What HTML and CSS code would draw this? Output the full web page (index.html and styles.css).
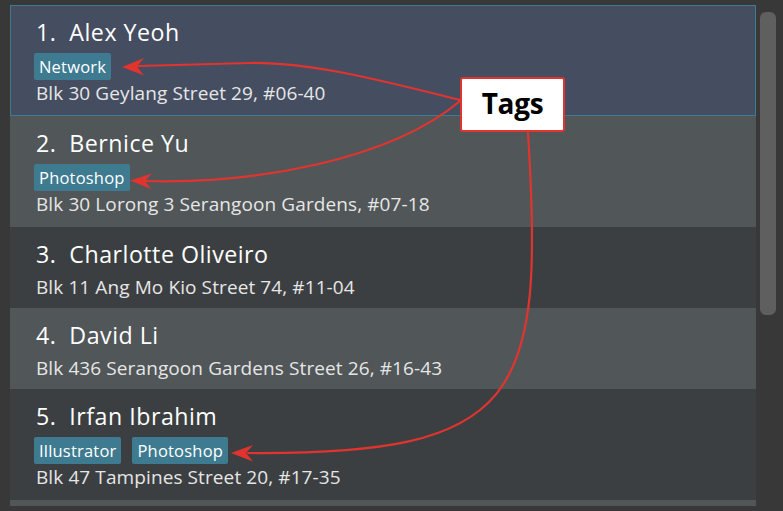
FILE: index.html
```html
<!DOCTYPE html>
<html lang="en">
<head>
<meta charset="utf-8">
<title>Address list</title>
<link rel="stylesheet" href="styles.css">
</head>
<body>
<div class="app">
  <div class="list">
    <div class="card selected">
      <div class="name-row"><span class="id">1.</span><span class="name">Alex Yeoh</span></div>
      <div class="tags"><span class="tag">Network</span></div>
      <div class="address">Blk 30 Geylang Street 29, #06-40</div>
    </div>
    <div class="card light">
      <div class="name-row"><span class="id">2.</span><span class="name">Bernice Yu</span></div>
      <div class="tags"><span class="tag">Photoshop</span></div>
      <div class="address">Blk 30 Lorong 3 Serangoon Gardens, #07-18</div>
    </div>
    <div class="card dark">
      <div class="name-row"><span class="id">3.</span><span class="name">Charlotte Oliveiro</span></div>
      <div class="address">Blk 11 Ang Mo Kio Street 74, #11-04</div>
    </div>
    <div class="card light">
      <div class="name-row"><span class="id">4.</span><span class="name">David Li</span></div>
      <div class="address">Blk 436 Serangoon Gardens Street 26, #16-43</div>
    </div>
    <div class="card dark">
      <div class="name-row"><span class="id">5.</span><span class="name">Irfan Ibrahim</span></div>
      <div class="tags"><span class="tag">Illustrator</span><span class="tag">Photoshop</span></div>
      <div class="address">Blk 47 Tampines Street 20, #17-35</div>
    </div>
    <div class="card light peek"></div>
  </div>
  <div class="scrollbar"><div class="thumb"></div></div>

  <div class="callout">Tags</div>
  <svg class="arrows" width="783" height="511" viewBox="0 0 783 511">
    <g fill="none" stroke="#e2342f" stroke-width="2.2" stroke-linecap="round">
      <path d="M460,100 C380,80 310,62 250,63 L138,66"/>
      <path d="M460,101 C390,160 255,184 146,181"/>
      <path d="M528,133 C545,400 520,455 248,453"/>
    </g>
    <g fill="#e2342f">
      <path d="M122,67 L144,58 L137,66.5 L144,75.5 Z"/>
      <path d="M130,180.5 L152,173.5 L145,181 L151,189 Z"/>
      <path d="M231,453 L253,445 L246,453 L253,461.5 Z"/>
    </g>
  </svg>
</div>
</body>
</html>
```
FILE: styles.css
```css
html, body {
  margin: 0;
  padding: 0;
  background: #383838;
}

.app {
  position: relative;
  box-sizing: border-box;
  width: 783px;
  height: 511px;
  padding: 5px 7px 5px 10px;
  display: flex;
  gap: 4px;
  overflow: hidden;
  font-family: "Open Sans", "Noto Sans", sans-serif;
}

.list {
  width: 746px;
  height: 501px;
  overflow: hidden;
  display: flex;
  flex-direction: column;
  flex-shrink: 0;
}

.card {
  flex-shrink: 0;
  box-sizing: border-box;
  border: 1px solid transparent;
  padding: 11px 0 8px 24px;
  color: #ffffff;
}

.card.dark { background: #3c3f41; }
.card.light { background: #515658; }
.card.selected {
  background: #454d61;
  border-color: #3e7b91;
}
.card.peek { height: 40px; }

.name-row {
  font-size: 23.2px;
  line-height: 31px;
  font-weight: 500;
  letter-spacing: 0.5px;
  margin-bottom: 5px;
  white-space: nowrap;
}

.id {
  margin-left: 1px;
  margin-right: 13px;
}

.tags {
  display: flex;
  gap: 11px;
  height: 27px;
  margin: 1px 0 1px -1px;
}

.tags + .address {
  margin-bottom: 2px;
}

.tag {
  display: flex;
  align-items: center;
  height: 27px;
  padding: 0 5px;
  border-radius: 2px;
  background: #3e7b91;
  color: #ffffff;
  font-size: 16.5px;
  letter-spacing: 0.2px;
}

.address {
  font-size: 19px;
  line-height: 24px;
  color: #e6e6e6;
  letter-spacing: 0.1px;
  padding-left: 1px;
  white-space: nowrap;
}

.scrollbar {
  width: 16px;
  padding-top: 7px;
  flex-shrink: 0;
}

.thumb {
  height: 303px;
  background: #5f5f5f;
  border-radius: 6px;
}

.callout {
  position: absolute;
  left: 460px;
  top: 77px;
  box-sizing: border-box;
  width: 105px;
  height: 55px;
  background: #ffffff;
  border: 2px solid #e2342f;
  border-radius: 3px;
  display: flex;
  align-items: center;
  justify-content: center;
  padding-bottom: 3px;
  font-size: 28px;
  font-weight: 700;
  color: #000000;
  letter-spacing: -0.3px;
}

.arrows {
  position: absolute;
  left: 0;
  top: 0;
  pointer-events: none;
}
```
